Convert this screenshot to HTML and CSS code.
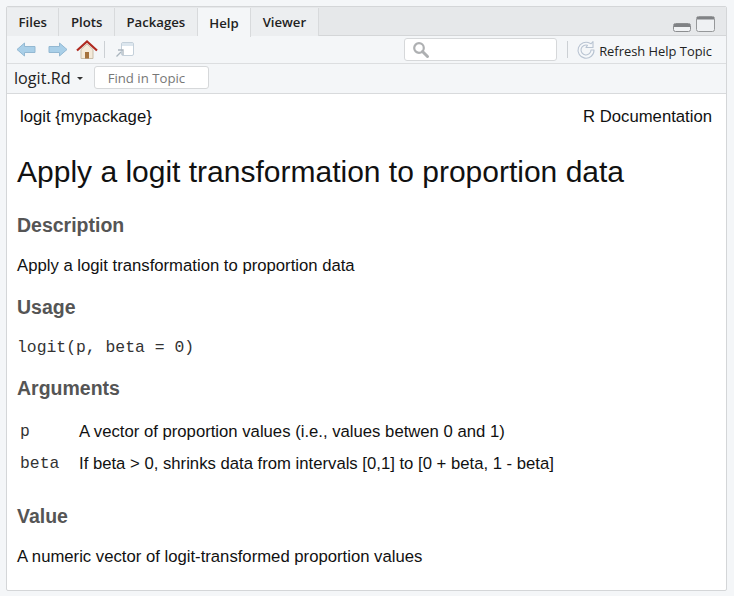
FILE: index.html
```html
<!DOCTYPE html>
<html lang="en">
<head>
<meta charset="utf-8">
<title>logit.Rd</title>
<link rel="stylesheet" href="styles.css">
</head>
<body>
<div class="panel">
  <div class="tabbar">
    <div class="tab">Files</div>
    <div class="tab">Plots</div>
    <div class="tab">Packages</div>
    <div class="tab active">Help</div>
    <div class="tab">Viewer</div>
    <div class="winbtns">
      <svg class="min" width="18" height="9" viewBox="0 0 18 9"><rect x="0.5" y="0.5" width="17" height="8" rx="2" fill="#f0f2f4" stroke="#8c8e90"/><rect x="1" y="1" width="16" height="3" fill="#808285"/></svg>
      <svg class="max" width="19" height="16" viewBox="0 0 19 16"><rect x="0.5" y="0.5" width="18" height="15" rx="2" fill="#eff1f3" stroke="#96989a"/><rect x="1" y="1" width="17" height="2.500" fill="#808285"/></svg>
    </div>
  </div>
  <div class="toolbar">
    <svg class="ico" width="20" height="15" viewBox="0 0 20 15"><path d="M1 7.500 8.500 1V4.500H19V10.500H8.500V14z" fill="#a9cfe8" stroke="#93b8d2"/></svg>
    <svg class="ico fwd" width="20" height="15" viewBox="0 0 20 15"><path d="M19 7.500 11.500 1V4.500H1V10.500H11.500V14z" fill="#a9cfe8" stroke="#93b8d2"/></svg>
    <svg class="ico home" width="22" height="20" viewBox="0 0 22 20"><path d="M5 9.500V18.500H17V9.500L11 4z" fill="#f4ead9" stroke="#c9bda8"/><rect x="9" y="12" width="4" height="6.500" fill="#a4713c"/><path d="M1 10.500 11 1.500 21 10.500" fill="none" stroke="#b02a20" stroke-width="2.200"/></svg>
    <span class="sep"></span>
    <svg class="ico pop" width="20" height="17" viewBox="0 0 20 17"><rect x="6.500" y="1.500" width="12" height="13" rx="1.500" fill="#fff" stroke="#c4d0da"/><rect x="7" y="2" width="11" height="3" fill="#dce6ee"/><path d="M1.500 15.500 6 11M3 9h5v5" fill="none" stroke="#a9b4bd" stroke-width="1.300"/></svg>
    <div class="search">
      <svg width="18" height="18" viewBox="0 0 18 18"><circle cx="7" cy="7" r="4.800" fill="none" stroke="#aeb0b2" stroke-width="2.200"/><path d="M10.500 10.500 15.500 15.500" stroke="#aeb0b2" stroke-width="3" stroke-linecap="round"/></svg>
    </div>
    <span class="sep sep2"></span>
    <svg class="ico refresh" width="20" height="20" viewBox="0 0 20 20"><path d="M14 3.300A8 8 0 1 0 18 10H15A5 5 0 1 1 11.500 5.200L10 7.500H17V1.500L15 3.800z" fill="#f6f8fa" stroke="#b9c4d2" stroke-width="1.100" stroke-linejoin="round"/></svg>
    <span class="refresh-label">Refresh Help Topic</span>
  </div>
  <div class="subbar">
    <span class="topic">logit.Rd</span>
    <span class="caret"></span>
    <div class="find">Find in Topic</div>
  </div>
  <main class="doc">
    <div class="dochead"><span>logit {mypackage}</span><span>R Documentation</span></div>
    <h1>Apply a logit transformation to proportion data</h1>
    <h2>Description</h2>
    <p>Apply a logit transformation to proportion data</p>
    <h2>Usage</h2>
    <pre>logit(p, beta = 0)</pre>
    <h2>Arguments</h2>
    <table class="args">
      <tr><td class="name">p</td><td>A vector of proportion values (i.e., values betwen 0 and 1)</td></tr>
      <tr><td class="name">beta</td><td>If beta &gt; 0, shrinks data from intervals [0,1] to [0 + beta, 1 - beta]</td></tr>
    </table>
    <h2 class="value">Value</h2>
    <p>A numeric vector of logit-transformed proportion values</p>
  </main>
</div>
</body>
</html>
```
FILE: styles.css
```css
* { box-sizing: border-box; }
html, body { height: 100%; }
body {
  margin: 0;
  padding: 6px 7px 5px 6px;
  background: #f4f6f8;
  font-family: "Liberation Sans", Arial, sans-serif;
  color: #111;
  overflow: hidden;
}
.panel {
  height: 585px;
  border: 1px solid #d4d6d8;
  border-radius: 2px;
  display: flex;
  flex-direction: column;
  background: #fff;
  overflow: hidden;
}
.tabbar {
  height: 29px;
  padding-top: 1px;
  background: #e6e8ea;
  display: flex;
  align-items: stretch;
  border-bottom: 1px solid #d4d6d8;
  flex: none;
}
.tab {
  padding: 0 11.500px;
  display: flex;
  align-items: center;
  font: 600 13.200px "Open Sans", sans-serif;
  color: #222;
  background: #eceef0;
  border-right: 1px solid #d8dadc;
  height: 28px;
}
.tab.active {
  background: #f4f6f8;
  height: 29px;
  position: relative;
  z-index: 1;
}
.winbtns {
  margin-left: auto;
  margin-right: 11px;
  display: flex;
  align-items: flex-end;
  gap: 5px;
  padding-bottom: 3px;
}
.toolbar {
  height: 28px;
  background: #f4f6f8;
  border-bottom: 1px solid #dcdee0;
  display: flex;
  align-items: center;
  padding-left: 9px;
  flex: none;
}
.ico { flex: none; display: block; }
.fwd { margin-left: 12px; }
.home { margin-left: 8px; }
.sep { width: 1px; height: 17px; background: #ccd0d4; margin-left: 6px; }
.pop { margin-left: 10px; }
.search {
  margin-left: auto;
  width: 153px;
  height: 23px;
  background: #fff;
  border: 1px solid #d6d8da;
  border-radius: 3px;
  padding: 2px 0 0 7px;
}
.search svg { display: block; }
.sep2 { margin-left: 10px; }
.refresh { margin-left: 8px; }
.refresh-label {
  font: 400 12.900px "Open Sans", sans-serif;
  color: #222;
  margin-left: 3px;
  margin-right: 14px;
  position: relative;
  top: 1px;
}
.subbar {
  height: 30px;
  background: #f4f6f8;
  border-bottom: 1px solid #d8dadc;
  display: flex;
  align-items: center;
  padding: 0 0 3px 7px;
  flex: none;
}
.topic { font: 400 16.200px "Open Sans", sans-serif; color: #222; margin-top: 2px; }
.caret {
  margin-left: 6px;
  margin-top: 2px;
  border: 3px solid transparent;
  border-top: 3px solid #333;
  border-bottom: 0;
}
.find {
  margin-left: 11px;
  width: 115px;
  height: 23px;
  background: #fff;
  border: 1px solid #d6d8da;
  border-radius: 3px;
  font: 400 13.200px "Open Sans", sans-serif;
  color: #777;
  padding-left: 13px;
  line-height: 23px;
}
.doc { flex: 1; padding: 0 14px 0 10px; font-size: 16.700px; line-height: 20px; }
.dochead {
  display: flex;
  justify-content: space-between;
  padding: 13px 0 0 3px;
}
h1 { font-size: 30px; font-weight: 400; line-height: 36px; margin: 27px 0 23px; }
h2 { font-size: 19.500px; font-weight: 700; line-height: 24px; color: #555; margin: 19px 0 0; }
p { margin: 19px 0 0; }
pre {
  margin: 19px 0 -1px;
  font: 16.400px/20px "Liberation Mono", monospace;
  color: #333;
}
.args { border-collapse: collapse; margin-top: 19px; }
.args td { padding: 3px 0 9px; vertical-align: top; }
.args td.name {
  font-family: "Liberation Mono", monospace;
  font-size: 16.400px;
  color: #333;
  width: 62px;
  padding-left: 3px;
}
h2.value { margin-top: 21px; }
```
